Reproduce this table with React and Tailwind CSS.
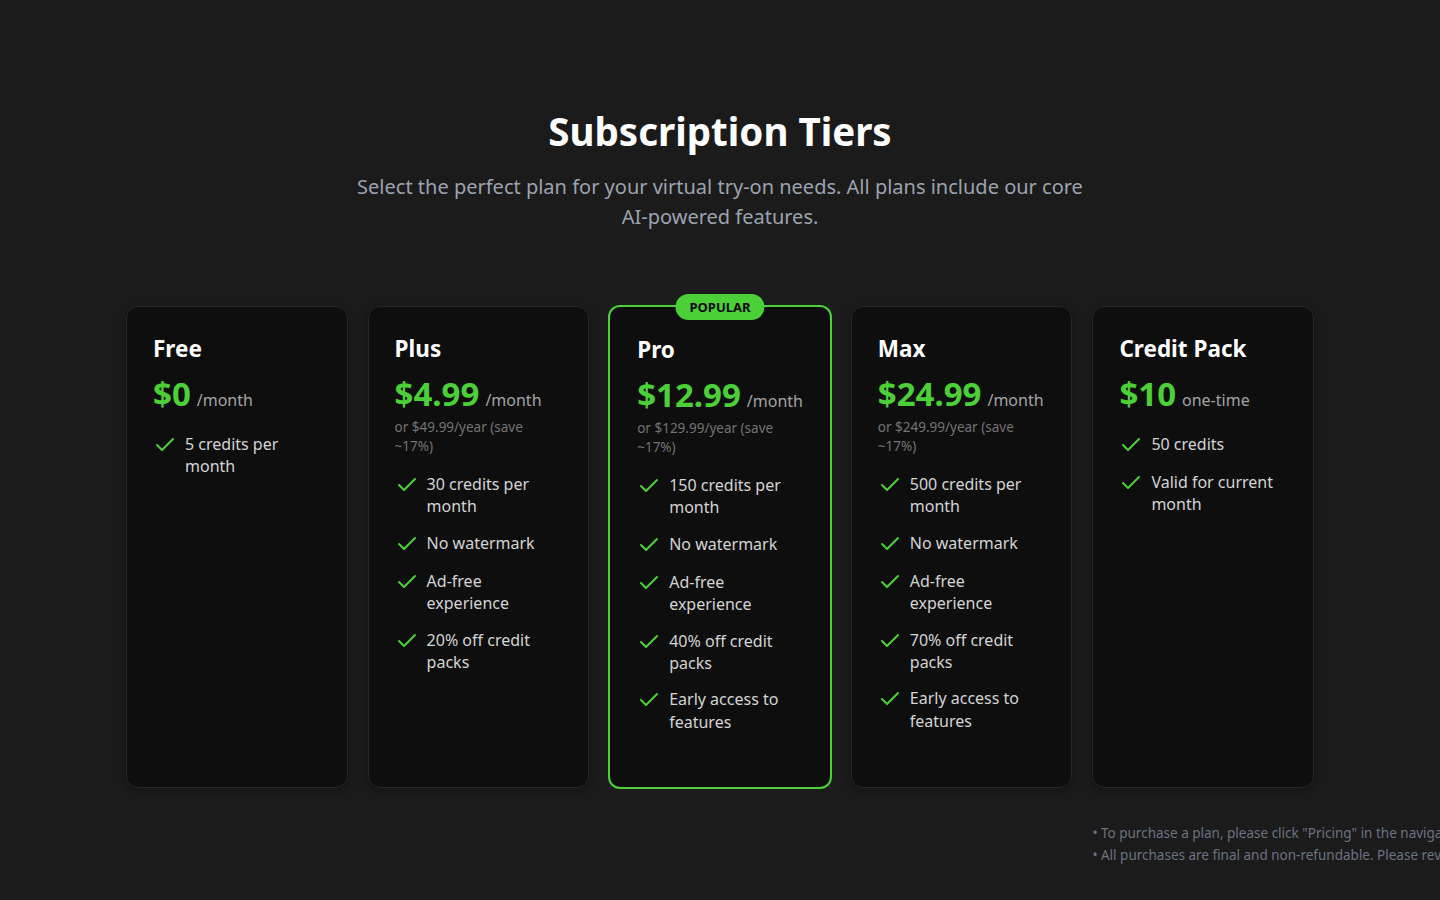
import React from "react";

function CheckIcon() {
  return (
    <svg
      width="24"
      height="24"
      viewBox="0 0 24 24"
      fill="none"
      stroke="currentColor"
      strokeWidth="2"
      strokeLinecap="round"
      strokeLinejoin="round"
      className="shrink-0 text-[#4cd038]"
    >
      <path d="M20 6 9 17l-5-5" />
    </svg>
  );
}

const plans = [
  {
    name: "Free",
    price: "$0",
    unit: "/month",
    features: ["5 credits per month"],
  },
  {
    name: "Plus",
    price: "$4.99",
    unit: "/month",
    note: "or $49.99/year (save ~17%)",
    features: ["30 credits per month", "No watermark", "Ad-free experience", "20% off credit packs"],
  },
  {
    name: "Pro",
    price: "$12.99",
    unit: "/month",
    note: "or $129.99/year (save ~17%)",
    popular: true,
    features: [
      "150 credits per month",
      "No watermark",
      "Ad-free experience",
      "40% off credit packs",
      "Early access to features",
    ],
  },
  {
    name: "Max",
    price: "$24.99",
    unit: "/month",
    note: "or $249.99/year (save ~17%)",
    features: [
      "500 credits per month",
      "No watermark",
      "Ad-free experience",
      "70% off credit packs",
      "Early access to features",
    ],
  },
  {
    name: "Credit Pack",
    price: "$10",
    unit: "one-time",
    features: ["50 credits", "Valid for current month"],
  },
];

function Card({ plan }) {
  const base = plan.popular
    ? "relative -m-px rounded-xl border-2 border-[#4cd038] bg-[#0e0e0e] pt-[27px] pl-[27px] pr-6 pb-6"
    : "relative rounded-xl border border-[#262626] bg-[#0e0e0e] pt-[26px] pl-[26px] pr-6 pb-6 shadow-[0_2px_8px_rgba(0,0,0,0.35)]";
  return (
    <div className={base + " min-h-[482px] flex flex-col"}>
      {plan.popular && (
        <div className="absolute left-1/2 top-0 -translate-x-1/2 -translate-y-1/2 rounded-full bg-[#4cd038] px-3.5 py-1 text-[13px] font-bold leading-[18px] text-[#0b0b0b]">
          POPULAR
        </div>
      )}
      <h3 className="text-[22.5px] font-bold leading-8 text-white">{plan.name}</h3>
      <div className="mt-[9px] flex items-baseline gap-1.5">
        <span className="text-[33px] font-bold leading-10 text-[#4cd038]">{plan.price}</span>
        <span className="text-base text-[#a3a3a3]">{plan.unit}</span>
      </div>
      {plan.note && (
        <p className="mt-[4px] text-[13.5px] leading-[19px] text-[#737373]">{plan.note}</p>
      )}
      <ul className={(plan.note ? "mt-[17px]" : "mt-[19px]") + " flex flex-col gap-[14px]"}>
        {plan.features.map((f) => (
          <li key={f} className="flex items-start gap-2">
            <CheckIcon />
            <span className="text-base leading-[22.4px] text-[#d4d4d4]">{f}</span>
          </li>
        ))}
      </ul>
    </div>
  );
}

export default function App() {
  return (
    <div
      className="min-h-screen w-full overflow-hidden bg-[#1b1b1b] pb-10"
      style={{ fontFamily: "'Noto Sans', 'Open Sans', sans-serif" }}
    >
      <div className="mx-auto w-[1188px] pt-[107px]">
        <h1 className="text-center text-[38.5px] font-bold leading-[48px] text-white">
          Subscription Tiers
        </h1>
        <p className="mx-auto mt-[17px] max-w-[748px] text-center text-xl leading-[30px] text-[#9ca3af]">
          Select the perfect plan for your virtual try-on needs. All plans include our core AI-powered features.
        </p>
        <div className="mt-[74px] grid grid-cols-5 gap-5">
          {plans.map((p) => (
            <Card key={p.name} plan={p} />
          ))}
        </div>
        <div className="mt-[34px] grid grid-cols-5 gap-5">
          <div className="col-start-5 whitespace-nowrap text-[13.5px] leading-[22px] text-[#6b7280]">
            <p>• To purchase a plan, please click "Pricing" in the navigation bar at the top of the page.</p>
            <p>• All purchases are final and non-refundable. Please review your selection carefully.</p>
          </div>
        </div>
      </div>
    </div>
  );
}
